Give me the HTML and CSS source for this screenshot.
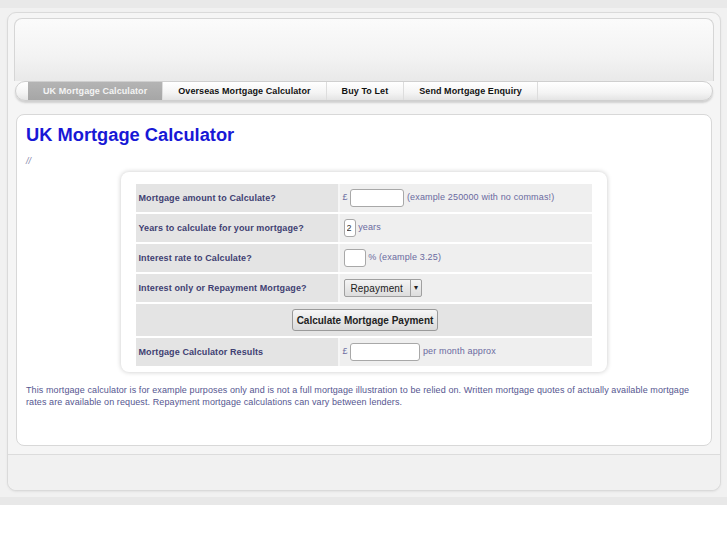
FILE: index.html
```html
<!DOCTYPE html>
<html lang="en">
<head>
    <meta charset="UTF-8">
    <meta name="viewport" content="width=device-width, initial-scale=1.0">
    <title>UK Mortgage Calculator</title>
    <link rel="stylesheet" href="styles.css">
</head>
<body>

<div class="page">
    <div class="wrap">
        <div class="header"></div>
        <div class="nav">
            <a class="tab active" href="#">UK Mortgage Calculator</a>
            <a class="tab" href="#">Overseas Mortgage Calculator</a>
            <a class="tab" href="#">Buy To Let</a>
            <a class="tab" href="#">Send Mortgage Enquiry</a>
        </div>

        <div class="content">
            <h1>UK Mortgage Calculator</h1>
            <p class="slashes">//</p>

            <div class="calc-box">
                <table class="calc">
                    <tr>
                        <td class="label">Mortgage amount to Calculate?</td>
                        <td class="value">&pound; <input type="text" class="amount"> (example 250000 with no commas!)</td>
                    </tr>
                    <tr>
                        <td class="label">Years to calculate for your mortgage?</td>
                        <td class="value"><input type="text" class="years" value="2"> years</td>
                    </tr>
                    <tr>
                        <td class="label">Interest rate to Calculate?</td>
                        <td class="value"><input type="text" class="rate"> % (example 3.25)</td>
                    </tr>
                    <tr>
                        <td class="label">Interest only or Repayment Mortgage?</td>
                        <td class="value">
                            <span class="select">Repayment<span class="arrow">&#9662;</span></span>
                        </td>
                    </tr>
                    <tr>
                        <td class="button-row" colspan="2"><button class="calc-button">Calculate Mortgage Payment</button></td>
                    </tr>
                    <tr>
                        <td class="label">Mortgage Calculator Results</td>
                        <td class="value">&pound; <input type="text" class="result"> per month approx</td>
                    </tr>
                </table>
            </div>

            <p class="note">This mortgage calculator is for example purposes only and is not a full mortgage illustration to be relied on. Written mortgage quotes of actually available mortgage rates are available on request. Repayment mortgage calculations can vary between lenders.</p>
        </div>

        <div class="footer"></div>
    </div>
</div>

</body>
</html>
```

FILE: styles.css
```css
body {
    margin: 0;
    background-color: #ffffff;
    font-family: "Liberation Sans", Arial, sans-serif;
}
.page {
    background-color: #f1f1f1;
    border-top: 8px solid #e9e9e9;
    border-bottom: 8px solid #e8e8e8;
    padding: 4px 6px 6px 7px;
}
.wrap {
    border: 1px solid #dadada;
    border-radius: 9px;
    background-color: #f5f5f5;
    padding: 5px 0 0 0;
    box-shadow: 0 1px 2px #e2e2e2;
}
.header {
    height: 62px;
    margin: 0 6px;
    border: 1px solid #d6d6d6;
    border-bottom: none;
    border-radius: 8px 8px 0 0;
    background: linear-gradient(#fbfbfb, #f3f3f3 60%, #e9e9e9);
}
.nav {
    display: flex;
    height: 18px;
    margin: 0 7px 0 7px;
    padding-left: 12px;
    border: 1px solid #cfcfcf;
    border-radius: 10px;
    background: linear-gradient(#ffffff, #f4f4f4 60%, #e4e4e4);
    box-shadow: 0 2px 2px #d0d0d0;
}
.tab {
    display: block;
    padding: 0 15px;
    line-height: 18px;
    font-size: 9px;
    font-weight: bold;
    letter-spacing: 0.08px;
    color: #111111;
    text-decoration: none;
    border-right: 1px solid #dddddd;
}
.tab.active {
    background: linear-gradient(#b4b4b4, #a6a6a6);
    color: #f4f4f4;
}
.content {
    margin: 13px 8px 0 8px;
    height: 311px;
    padding: 9px 10px 10px 9px;
    background-color: #ffffff;
    border: 1px solid #d8d8d8;
    border-radius: 8px;
}
h1 {
    margin: 0;
    font-size: 18.3px;
    line-height: 22px;
    color: #1818d6;
}
.slashes {
    margin: 10px 0 0 0;
    font-size: 9px;
    font-style: italic;
    color: #8888aa;
}
.calc-box {
    width: 456px;
    margin: 6px auto 0 auto;
    padding: 10px 15px 4px 15px;
    background-color: #ffffff;
    border-radius: 8px;
    box-shadow: 0 0 5px #c8c8c8;
}
.calc {
    border-collapse: separate;
    border-spacing: 0 2px;
    width: 456px;
    font-size: 9px;
    letter-spacing: 0.15px;
}
.calc td {
    height: 28px;
    padding: 0 0 0 3px;
}
.label {
    width: 199px;
    background-color: #e4e4e4;
    border-right: 2px solid #f6f6f6;
    font-size: 9px;
    font-weight: bold;
    letter-spacing: 0.1px;
    color: #3f3f72;
}
.value {
    background-color: #efefef;
    color: #6a6aa0;
    padding-left: 3px !important;
}
.button-row {
    height: 32px !important;
    text-align: center;
    background-color: #e4e4e4;
}
input {
    height: 18px;
    box-sizing: border-box;
    border: 1px solid #a8a8a8;
    border-radius: 3px;
    background-color: #ffffff;
    font-family: "Liberation Sans", Arial, sans-serif;
    font-size: 9px;
    vertical-align: middle;
    padding: 0 2px;
}
.amount {
    width: 54px;
}
.years {
    width: 12px;
    margin-left: 1px;
    color: #333333;
}
.rate {
    width: 22px;
    margin-left: 1px;
}
.result {
    width: 70px;
}
.select {
    display: inline-flex;
    align-items: center;
    height: 18px;
    box-sizing: border-box;
    margin-left: 1px;
    padding-left: 6px;
    border: 1px solid #a0a0a0;
    border-radius: 2px;
    background: linear-gradient(#f4f4f4, #dcdcdc);
    color: #222222;
    font-size: 10px;
    vertical-align: middle;
}
.arrow {
    margin-left: 7px;
    padding: 0 3px;
    line-height: 16px;
    border-left: 1px solid #a0a0a0;
    font-size: 8px;
}
.calc-button {
    height: 22px;
    padding: 0 4px;
    border: 1px solid #9a9a9a;
    border-radius: 3px;
    background: linear-gradient(#f6f6f6, #dadada);
    font-family: "Liberation Sans", Arial, sans-serif;
    font-size: 10px;
    font-weight: bold;
    color: #222222;
    cursor: pointer;
}
.note {
    margin: 12px 0 0 0;
    font-size: 9px;
    line-height: 12px;
    letter-spacing: 0.1px;
    color: #565690;
}
.footer {
    height: 35px;
    margin-top: 8px;
    border-top: 1px solid #dcdcdc;
    border-radius: 0 0 9px 9px;
    background-color: #f1f1f1;
}
```
